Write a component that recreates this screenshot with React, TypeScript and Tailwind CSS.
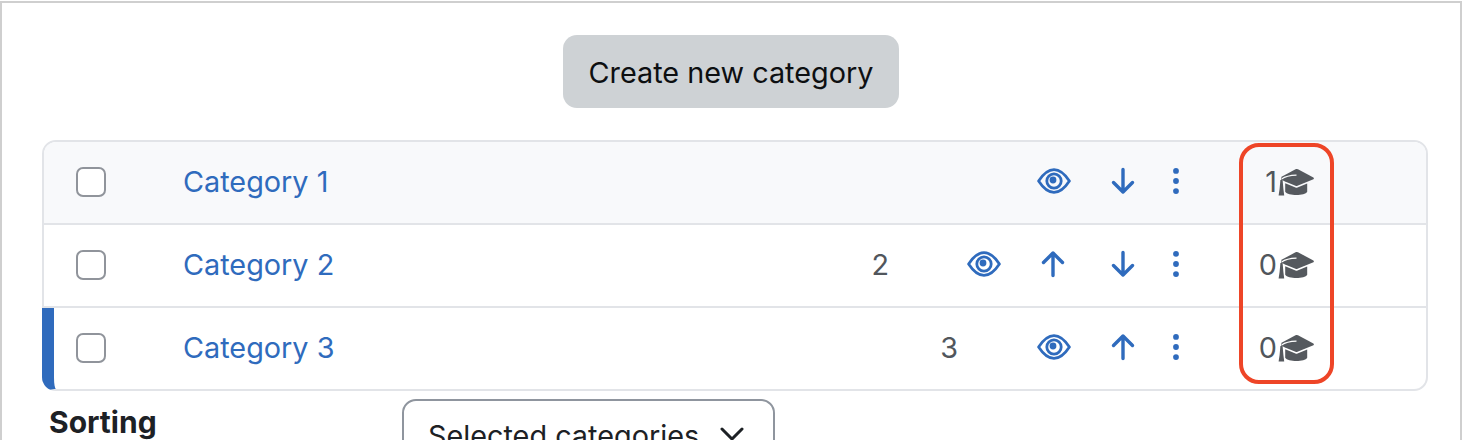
import React from 'react';
import { ChevronDown } from 'lucide-react';

const Eye = () => (
  <svg width="34" height="26" viewBox="0 0 34 26" fill="none" stroke="#2f6bbd" strokeWidth="2.8" className="ml-[2px]">
    <path d="M1.6 13 C6.5 5.5 11.5 1.6 17 1.6 C22.5 1.6 27.5 5.5 32.4 13 C27.5 20.5 22.5 24.4 17 24.4 C11.5 24.4 6.5 20.5 1.6 13 Z" strokeLinejoin="round" />
    <circle cx="17" cy="13" r="7.2" />
    <circle cx="16" cy="12" r="3.4" fill="#2f6bbd" stroke="none" />
  </svg>
);

const ArrowDown = () => (
  <svg width="24" height="28" viewBox="0 0 24 28" fill="none" stroke="#2f6bbd" strokeWidth="3.4" strokeLinecap="round" strokeLinejoin="round">
    <path d="M12 2.5 V25 M2.5 15.5 L12 25 L21.5 15.5" />
  </svg>
);

const ArrowUp = () => (
  <svg width="24" height="28" viewBox="0 0 24 28" fill="none" stroke="#2f6bbd" strokeWidth="3.4" strokeLinecap="round" strokeLinejoin="round">
    <path d="M12 25.5 V3 M2.5 12.5 L12 3 L21.5 12.5" />
  </svg>
);

const Dots = () => (
  <svg width="10" height="26" viewBox="0 0 10 26" fill="#2f6bbd">
    <circle cx="5" cy="2.9" r="2.9" />
    <circle cx="5" cy="13" r="2.9" />
    <circle cx="5" cy="23.1" r="2.9" />
  </svg>
);

// gap is the colour of the row behind, it shows through the tassel string
const Cap = ({ gap }: { gap: string }) => (
  <svg width="36" height="28" viewBox="0 0 36 28" fill="#55595e" className="shrink-0">
    <path d="M18 1 Q19 0.7 20 1.2 L35.4 9.6 Q36.4 10.4 35.4 11.2 L19.5 17.8 Q18.5 18.2 17.5 17.8 L7 13.5 L3 11.5 Q2.6 9.5 4.5 8.3 Z" />
    <path d="M3.6 11 C7 8.6 12 7.4 18.5 7.2" fill="none" stroke={gap} strokeWidth="1.2" />
    <path d="M2.4 12 L4.6 12 L5.4 21 L6.2 27.5 L0.6 27.5 L1.6 21 Z" />
    <path d="M7.2 15.2 L17.5 19.6 Q18.5 20 19.5 19.6 L29.2 15.6 V23.8 C27 28.2 10 28.2 7.2 23.8 Z" />
  </svg>
);

type Row = { name: string; num?: string; icons: ('eye' | 'up' | 'down')[]; count: string };

const rows: Row[] = [
  { name: 'Category 1', icons: ['eye', 'down'], count: '1' },
  { name: 'Category 2', num: '2', icons: ['eye', 'up', 'down'], count: '0' },
  { name: 'Category 3', num: '3', icons: ['eye', 'up'], count: '0' },
];

function CategoryRow({ row, index }: { row: Row; index: number }) {
  return (
    <div className={`relative flex items-center ${index === 0 ? 'h-[81px] bg-[#f8f9fb] rounded-t-[12px]' : 'h-[83px] border-t-2 border-[#e2e4e8]'}`}>
      {index === 2 && (
        <div className="absolute left-[-2px] top-0 bottom-[-2px] w-[22px] border-l-[12px] border-b-2 border-l-[#2f6bbd] border-b-transparent rounded-bl-[14px]" />
      )}
      <div className="ml-[32px] w-[30px] h-[30px] -mt-[2px] rounded-[7px] border-2 border-[#90949b] bg-white shrink-0" />
      <a className="ml-[77px] text-[#2f6bbd] text-[28.8px] leading-none whitespace-nowrap">{row.name}</a>
      <div className="ml-auto flex items-center">
        {row.num && <span className={`text-[28.8px] leading-none text-[#51565c] ${index === 1 ? 'mr-[59px]' : 'mr-[60px]'}`}>{row.num}</span>}
        {row.icons.map(ic => (
          <div key={ic} className="w-[70px] flex justify-center -mt-[2px]">
            {ic === 'eye' && <Eye />}
            {ic === 'up' && <ArrowUp />}
            {ic === 'down' && <ArrowDown />}
          </div>
        ))}
        <div className="w-[36px] flex justify-center -mt-[2px]"><Dots /></div>
        <div className="w-[232px] pr-[112px] flex items-center justify-end text-[28.8px] leading-none text-[#51565c]">
          <span className="mr-px">{row.count}</span><Cap gap={index === 0 ? '#f8f9fb' : '#ffffff'} />
        </div>
      </div>
    </div>
  );
}

export default function App() {
  return (
    <div className="pt-px">
      <div className="w-[1462px] h-[439px] overflow-hidden bg-white border-t-2 border-x-2 border-[#cfcfcf] font-['Inter',sans-serif]">
        <div className="flex justify-center pt-[32px]">
          <button className="h-[73px] w-[336px] pt-[2px] rounded-[14px] bg-[#ced2d5] text-[28.8px] text-[#0d0f11]">Create new category</button>
        </div>
        <div className="relative ml-[40px] mr-[32px] mt-[32px] border-2 border-[#e2e4e8] rounded-[14px]">
          {rows.map((r, i) => <CategoryRow key={r.name} row={r} index={i} />)}
          <div className="absolute left-[1195px] top-px w-[95px] h-[241px] border-4 border-[#ee4527] rounded-[20px]" />
        </div>
        <div className="mx-[47px] flex">
          <div className="pt-[16px] text-[30px] font-bold text-[#1d2125] w-[353px] leading-none">Sorting</div>
          <div className="mt-[8px] w-[373px] h-[70px] border-2 border-[#8f959e] rounded-[14px] pl-[24px] pt-[21px] flex text-[28.8px] leading-none text-[#1d2125]">
            <span>Selected categories</span><ChevronDown size={40} strokeWidth={1.8} className="text-[#1d2125] -mt-[8px] ml-[13px] shrink-0" />
          </div>
        </div>
      </div>
    </div>
  );
}
